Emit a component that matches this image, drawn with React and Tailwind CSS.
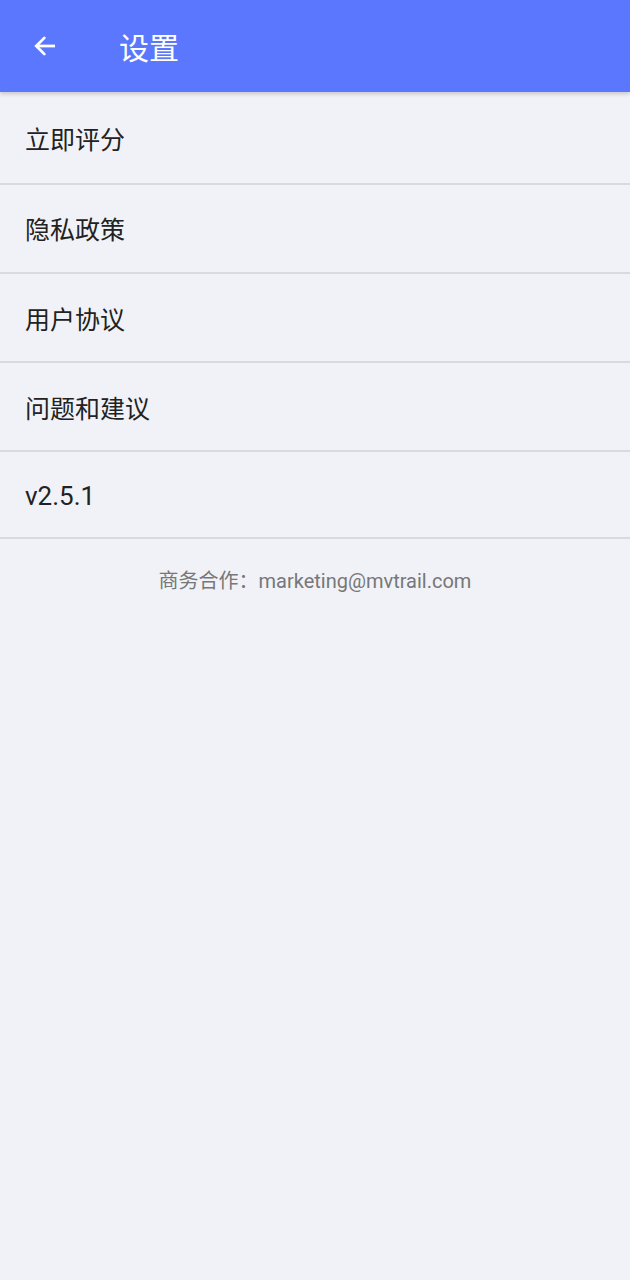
import React from "react";

const items = [
  { label: "立即评分", h: "h-[93px]", mt: "mt-[7px]" },
  { label: "隐私政策", h: "h-[89px]", mt: "mt-[5px]" },
  { label: "用户协议", h: "h-[89px]", mt: "mt-[6px]" },
  { label: "问题和建议", h: "h-[89px]", mt: "mt-[6px]" },
];

const font = {
  fontFamily: '"Roboto", "Noto Sans CJK SC", sans-serif',
};

export default function App() {
  return (
    <div className="min-h-[1280px] w-full bg-[#f1f2f7]" style={font}>
      <div className="relative z-10 flex h-[92px] items-center bg-[#5b77fe] shadow-[0_2px_4px_rgba(0,0,0,0.18)]">
        <div className="flex w-[92px] items-center justify-center">
          <svg
            width="30"
            height="30"
            viewBox="0 0 24 24"
            fill="none"
            stroke="white"
            strokeWidth="2.2"
            className="-ml-[2px]"
          >
            <path d="M20 12H5" />
            <path d="M11.5 5.5L5 12l6.5 6.5" strokeLinecap="round" />
          </svg>
        </div>
        <span className="ml-[27px] mt-[5px] text-[30px] text-white">设置</span>
      </div>
      <div>
        {items.map((it) => (
          <div
            key={it.label}
            className={`flex ${it.h} items-center border-b-2 border-[#d9d9de] pl-[25px] text-[25px] text-[#222222]`}
          >
            <span className={it.mt}>{it.label}</span>
          </div>
        ))}
        <div className="flex h-[87px] items-center border-b-2 border-[#d9d9de] pl-[25px] text-[26px] text-[#222222]">
          <span className="mt-[4px]">v2.5.1</span>
        </div>
      </div>
      <p className="mt-[27px] text-center text-[20px] text-[#777777]">
        商务合作：marketing@mvtrail.com
      </p>
    </div>
  );
}
